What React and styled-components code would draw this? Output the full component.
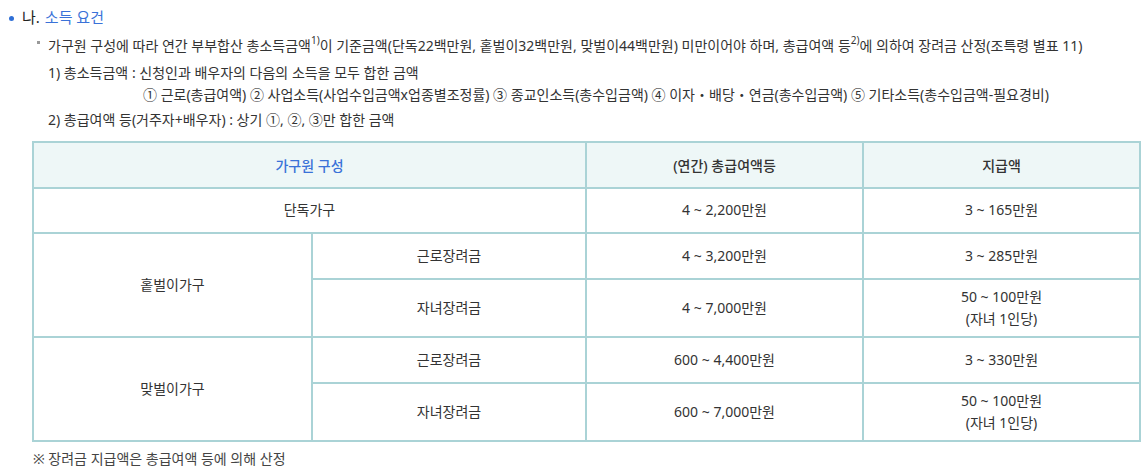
import React from "react";
import styled, { createGlobalStyle } from "styled-components";

const GlobalStyle = createGlobalStyle`
  body {
    margin: 0;
    background: #fff;
    font-family: "Noto Sans", "Noto Sans CJK KR", sans-serif;
    color: #333;
  }
`;

const Page = styled.div`
  width: 1148px;
  height: 472px;
  padding: 6px 0 0 9px;
  box-sizing: border-box;
  overflow: hidden;
`;

const Heading = styled.div`
  display: flex;
  align-items: center;
  font-size: 15px;
  line-height: 22px;
  color: #222;
`;

const Dot = styled.span`
  width: 5px;
  height: 5px;
  border-radius: 50%;
  background: #2f6fd6;
  margin: 2px 8px 0 0;
`;

const Blue = styled.span`
  color: #3a72d8;
  margin-left: 5px;
`;

const Body = styled.div`
  padding-left: 21px;
  margin-top: 7px;
  font-size: 14px;
  color: #333;
`;

const Lead = styled.p`
  margin: 0;
  line-height: 22px;
  display: flex;
  align-items: flex-start;
  white-space: nowrap;
  sup {
    font-size: 10px;
    line-height: 0;
    position: relative;
    top: -1px;
  }
`;

const TinyMark = styled.span`
  width: 3px;
  height: 3px;
  background: #999;
  margin: 6px 8px 0 7px;
  flex: none;
`;

const Item = styled.p`
  margin: ${p => p.$top || 0}px 0 0 ${p => p.$indent || 18}px;
  line-height: 22px;
  white-space: nowrap;
`;

const Table = styled.table`
  margin: 10px 0 0 2px;
  width: 1107px;
  border-collapse: collapse;
  table-layout: fixed;
  font-size: 14px;
  color: #333;
`;

const Th = styled.th`
  height: 43.5px;
  background: #eef7f7;
  border: 2px solid #aad3d6;
  font-weight: 500;
  color: ${p => (p.$blue ? "#3a72d8" : "#333")};
  padding: 0;
`;

const Td = styled.td`
  height: ${p => p.$h || 43.5}px;
  border: 2px solid #aad3d6;
  text-align: center;
  line-height: 22px;
  padding: 0;
`;

const Note = styled.p`
  margin: 6px 0 0 3px;
  font-size: 14px;
  color: #444;
`;

const rows = [
  { group: "홑벌이가구", items: [
    ["근로장려금", "4 ~ 3,200만원", ["3 ~ 285만원"], 43.5],
    ["자녀장려금", "4 ~ 7,000만원", ["50 ~ 100만원", "(자녀 1인당)"], 56.5],
  ] },
  { group: "맞벌이가구", items: [
    ["근로장려금", "600 ~ 4,400만원", ["3 ~ 330만원"], 42],
    ["자녀장려금", "600 ~ 7,000만원", ["50 ~ 100만원", "(자녀 1인당)"], 56],
  ] },
];

export default function App() {
  return (
    <Page>
      <GlobalStyle />
      <Heading>
        <Dot />
        나.<Blue>소득 요건</Blue>
      </Heading>
      <Body>
        <Lead>
          <TinyMark />
          <span>
            가구원 구성에 따라 연간 부부합산 총소득금액<sup>1)</sup>이 기준금액(단독22백만원, 홑벌이32백만원, 맞벌이44백만원) 미만이어야 하며, 총급여액 등<sup>2)</sup>에 의하여 장려금 산정(조특령 별표 11)
          </span>
        </Lead>
        <Item $top={5}>1) 총소득금액 : 신청인과 배우자의 다음의 소득을 모두 합한 금액</Item>
        <Item $indent={113}>
          ① 근로(총급여액) ② 사업소득(사업수입금액x업종별조정률) ③ 종교인소득(총수입금액) ④ 이자・배당・연금(총수입금액) ⑤ 기타소득(총수입금액-필요경비)
        </Item>
        <Item $top={3}>2) 총급여액 등(거주자+배우자) : 상기 ①, ②, ③만 합한 금액</Item>
        <Table>
          <colgroup>
            <col style={{ width: 279 }} />
            <col style={{ width: 274 }} />
            <col style={{ width: 277 }} />
            <col style={{ width: 277 }} />
          </colgroup>
          <thead>
            <tr>
              <Th colSpan={2} $blue>가구원 구성</Th>
              <Th>(연간) 총급여액등</Th>
              <Th>지급액</Th>
            </tr>
          </thead>
          <tbody>
            <tr>
              <Td colSpan={2}>단독가구</Td>
              <Td>4 ~ 2,200만원</Td>
              <Td>3 ~ 165만원</Td>
            </tr>
            {rows.map(r =>
              r.items.map((it, i) => (
                <tr key={r.group + i}>
                  {i === 0 && <Td rowSpan={2}>{r.group}</Td>}
                  <Td $h={it[3]}>{it[0]}</Td>
                  <Td>{it[1]}</Td>
                  <Td>
                    {it[2].map(line => (
                      <div key={line}>{line}</div>
                    ))}
                  </Td>
                </tr>
              ))
            )}
          </tbody>
        </Table>
        <Note>※ 장려금 지급액은 총급여액 등에 의해 산정</Note>
      </Body>
    </Page>
  );
}
